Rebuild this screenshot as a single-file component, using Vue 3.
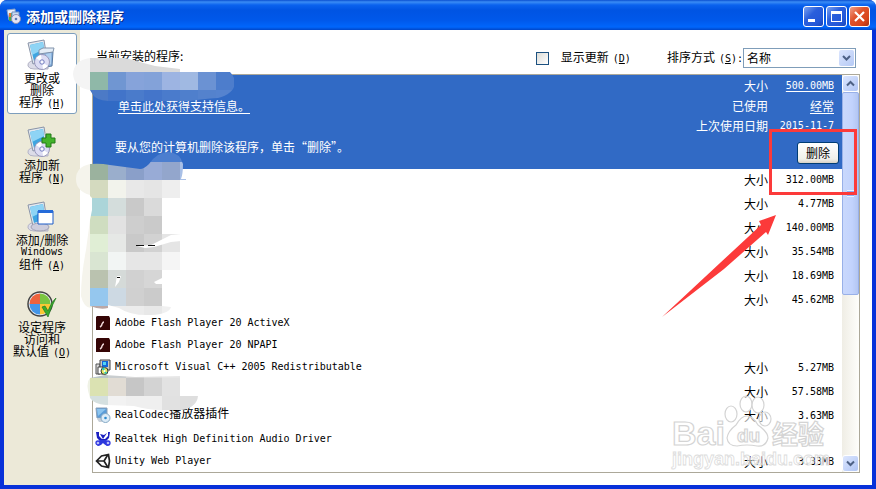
<script setup>
import { ref } from 'vue';

const showUpdates = ref(false);
const sortBy = ref('名称');

const tasks = [
  { icon: 'change', lines: ['更改或', '删除'], last: '程序', key: 'H', active: true },
  { icon: 'add', lines: ['添加新'], last: '程序', key: 'N' },
  { icon: 'windows', lines: ['添加/删除', 'Windows'], last: '组件', key: 'A' },
  { icon: 'defaults', lines: ['设定程序', '访问和'], last: '默认值', key: 'O' },
];

const programs = [
  { id: 1, size: '312.00MB' },
  { id: 2, size: '4.77MB' },
  { id: 3, size: '140.00MB' },
  { id: 4, size: '35.54MB' },
  { id: 5, size: '18.69MB' },
  { id: 6, size: '45.62MB' },
  { id: 7, icon: 'flash', name: 'Adobe Flash Player 20 ActiveX' },
  { id: 8, icon: 'flash', name: 'Adobe Flash Player 20 NPAPI' },
  { id: 9, icon: 'setup', name: 'Microsoft Visual C++ 2005 Redistributable', size: '5.27MB' },
  { id: 10, size: '57.58MB' },
  { id: 11, icon: 'codec', name: 'RealCodec', suffix: '播放器插件', size: '3.63MB' },
  { id: 12, icon: 'realtek', name: 'Realtek High Definition Audio Driver' },
  { id: 13, icon: 'unity', name: 'Unity Web Player', size: '3.33MB' },
];

// mosaic cells, 18px each, starting at x = 90
const topMosaic = [
  { y: 72, colors: ['#8fb8a8', '#7096d2', '#86a3da', '#83a2d9', '#9db4e2', '#a0b9e2', '#6b92d3', '#4d7dcc'] },
  { y: 90, colors: ['#4c7ac6', '#4274c9', '#4a7bcb', '#4475ca', '#4a7bcc', '#4f7fcc', '#5482cd', '#5583cf'] },
];
const middleMosaic = [
  { y: 144, colors: ['#4c7ecf', '#4c7ecf', '#4c7ecf', '#4c7ecf', '#4c7ecf', '#5584d0'] },
  { y: 162, colors: ['#9bb29e', '#9aaecc', '#8a9fc9', '#98abd6', '#93a6cc', '#a8bfe6'] },
  { y: 180, colors: ['#d4dabf', '#f2f3ec', '#e8e8e8', '#e5e5e5', '#eeeeee'] },
  { y: 198, colors: ['#abd5d9', '#d4dddc', '#c9c9c9', '#dadada'] },
  { y: 216, colors: ['#cfddc0', '#e2e2e2', '#cecece', '#cacaca'] },
  { y: 234, colors: ['#e0eed5', '#e6e8e6', '#c9c9c9', '#d2d2d2', '#e5e5e5'] },
  { y: 252, colors: ['#d9e5d2', '#f2f5f4', '#e6e6e6', '#e6e6e6', '#f5f5f5'] },
  { y: 270, colors: ['#bac2af', '#d5dad8', '#d1d1d1', '#d6d6d6'] },
  { y: 288, colors: ['#95c7ee', '#cdd9e3', '#d0d0d0', '#cbcbcb'] },
  { y: 306, colors: ['#bba8a6', '#ececec', '#ececec', '#e8e8e8', '#f0f0f0'] },
];
const bottomMosaic = [
  { y: 360, colors: ['#b9c5c8', '#c9cdcf', '#d8d8d8', '#e0e0e0', '#e6e6e6'] },
  { y: 378, colors: ['#dbe2b2', '#e1dcd4', '#c6c6c6', '#d3d3d3', '#e2e2e2'] },
  { y: 396, colors: ['#d5e0e0', '#f2f2f2', '#efefef', '#efefef', '#e1e1e1', '#dedede'] },
];
const mosaics = [
  { clip: 'url(#clipTop)', rows: topMosaic },
  { clip: 'url(#clipMiddle)', rows: middleMosaic },
  { clip: 'url(#clipBottom)', rows: bottomMosaic },
];
</script>

<template>
  <div class="window">
    <header class="titlebar">
      <svg class="title-icon" width="16" height="16" viewBox="0 0 16 16">
        <path d="M1 2l8-1 1 10-7 1z" fill="#e9eef8" stroke="#8aa2c8" />
        <path d="M3 5h4v8H3z" fill="#48a848" />
        <path d="M3 5h2v4H3z" fill="#e87830" />
        <path d="M6 4h7v8H6z" fill="#c9dbf4" stroke="#7190c0" />
        <circle cx="10" cy="11" r="4.5" fill="#e4e4f4" stroke="#8c90b4" />
        <circle cx="10" cy="11" r="1.3" fill="#5a78b0" />
      </svg>
      <h1>添加或删除程序</h1>
      <div class="window-buttons">
        <button type="button" aria-label="最小化">
          <svg width="19" height="19" viewBox="0 0 19 19"><path d="M4 12h7v3H4z" fill="#fff" /></svg>
        </button>
        <button type="button" aria-label="最大化">
          <svg width="19" height="19" viewBox="0 0 19 19">
            <path d="M4 4h11v11H4zM5 7v7h9V7z" fill="#fff" fill-rule="evenodd" />
          </svg>
        </button>
        <button type="button" class="close" aria-label="关闭">
          <svg width="19" height="19" viewBox="0 0 19 19">
            <path d="M5 5l9 9M14 5l-9 9" stroke="#fff" stroke-width="2.2" />
          </svg>
        </button>
      </div>
    </header>

    <div class="body">
      <nav class="sidebar">
        <button
          v-for="task in tasks"
          :key="task.icon"
          type="button"
          class="task"
          :class="{ active: task.active }"
        >
          <svg v-if="task.icon !== 'defaults'" width="32" height="32" viewBox="0 0 32 32">
            <path d="M5 22q-4 2-3 5t6 3h14v-5z" fill="#dcdce8" stroke="#b4b4c6" />
            <path d="M2 4l16-3 3 19-14 5z" fill="#e3e8ef" stroke="#8994a8" />
            <path d="M4 6l13-3 2 15-11 4z" fill="#3fa5e0" />
            <path d="M4 6l13-3 1 7-12 6z" fill="#8ed4f5" />
            <template v-if="task.icon === 'change'">
              <path d="M14 13h13l-1 14-12 2z" fill="#8cb4e0" stroke="#58799f" />
              <path d="M13 11l4-2h11l-1 4-14 2z" fill="#e4edf6" stroke="#8193ab" />
              <path d="M20 15l5-1v11l-5 1z" fill="#b0d0ee" />
            </template>
            <template v-if="task.icon !== 'windows'">
              <circle cx="16" cy="23" r="7.5" fill="#dcdcf3" stroke="#9898ba" />
              <path d="M16 23l-6-4q3-3 5-3zM16 23l6 4q-3 3-5 3z" fill="#fff" />
              <circle cx="16" cy="23" r="2.2" fill="#f8f8ff" stroke="#6f78bd" />
            </template>
            <path
              v-if="task.icon === 'add'"
              d="M20 8h5v4h4v5h-4v4h-5v-4h-4v-5h4z"
              fill="#43b32b"
              stroke="#237a18"
            />
            <template v-if="task.icon === 'windows'">
              <ellipse cx="14" cy="26" rx="9" ry="4" fill="#ccccdc" stroke="#a0a0b4" />
              <path d="M12 10h15v13H12z" fill="#fff" stroke="#1c5cc8" />
              <path d="M12 9h15v3H12z" fill="#256bd9" />
            </template>
          </svg>
          <svg v-else width="32" height="32" viewBox="0 0 32 32">
            <circle cx="14" cy="16" r="12" fill="#e8edf4" stroke="#444" stroke-width="1.5" />
            <path d="M14 16V5.500A10.500 10.500 0 0 0 3.500 16z" fill="#ee633d" />
            <path d="M14 16V5.500A10.500 10.500 0 0 1 24.500 16z" fill="#7bc542" />
            <path d="M14 16v10.500A10.500 10.500 0 0 1 3.500 16z" fill="#4496e8" />
            <path d="M14 16v10.500A10.500 10.500 0 0 0 24.500 16z" fill="#fbc834" />
            <path d="M16 19l3-1 3 5q3-9 8-13-5 9-8 19z" fill="#39ac2c" stroke="#237b20" stroke-width=".7" />
          </svg>
          <span
            v-for="line in task.lines"
            :key="line"
            class="line"
            :class="{ latin: line === 'Windows' }"
          >{{ line }}</span>
          <span class="line">{{ task.last }}<span class="latin key">(<u>{{ task.key }}</u>)</span></span>
        </button>
      </nav>

      <main>
        <div class="toolbar">
          <h2>当前安装的程序:</h2>
          <label class="updates">
            <input v-model="showUpdates" type="checkbox" />
            <span>显示更新<span class="latin key">(<u>D</u>)</span></span>
          </label>
          <label class="sort-label" for="sort">排序方式<span class="latin key">(<u>S</u>):</span></label>
          <div class="sort">
            <select id="sort" v-model="sortBy">
              <option>名称</option>
              <option>大小</option>
            </select>
            <span class="drop">
              <svg width="9" height="7" viewBox="0 0 9 7">
                <path d="M1 1l3.5 3.5L8 1" fill="none" stroke="#4d6185" stroke-width="2" />
              </svg>
            </span>
          </div>
        </div>

        <div class="list">
          <div class="items">
            <section class="selected">
              <div class="info">
                <a href="#">单击此处获得支持信息。</a>
                <p>要从您的计算机删除该程序，单击“删除”。</p>
              </div>
              <div class="stats">
                <div class="stat"><span>大小</span><a href="#" class="value latin">500.00MB</a></div>
                <div class="stat"><span>已使用</span><a href="#" class="value">经常</a></div>
                <div class="stat"><span>上次使用日期</span><span class="value latin">2015-11-7</span></div>
                <button type="button" class="remove">删除</button>
              </div>
            </section>

            <div
              v-for="program in programs"
              :key="program.id"
              class="row"
              :class="{ sized: program.size }"
            >
              <svg v-if="program.icon" class="row-icon" width="16" height="16" viewBox="0 0 16 16">
                <template v-if="program.icon === 'flash'">
                  <path d="M2 1h12l1 2v12H1V2z" fill="#350505" />
                  <path d="M5 12q2-1 2-3 1-2 2-2" fill="none" stroke="#f4dede" stroke-width="1.5" />
                </template>
                <template v-if="program.icon === 'setup'">
                  <path d="M1 5h4v10H1z" fill="#d8d8d8" stroke="#555" />
                  <path d="M5 1h10v10H5z" fill="#c8c8c8" stroke="#444" />
                  <path d="M7 2h6v6H7z" fill="#1467d8" />
                  <path d="M8 3h3v3H8z" fill="#52d6f4" />
                  <path d="M3 8h5v7H3z" fill="#fff" stroke="#444" />
                  <circle cx="9.5" cy="12" r="3.5" fill="#e8e85a" stroke="#333" />
                  <path d="M9.5 12l-3-2 3-2zM9.5 12l3 2-3 1z" fill="#20c8c0" />
                  <circle cx="9.5" cy="12" r="1" fill="#fff" />
                </template>
                <template v-if="program.icon === 'codec'">
                  <path d="M1 1h11v10H2z" fill="#5a9cd8" stroke="#8aa0b8" />
                  <path d="M2 2h9L3 9z" fill="#8cc4ee" />
                  <path d="M2 12h8v3H4z" fill="#c9d0d8" />
                  <circle cx="10.5" cy="11" r="4.5" fill="#dcecf8" stroke="#84a8c4" />
                  <circle cx="10.5" cy="11" r="1.3" fill="#2d8ace" />
                </template>
                <template v-if="program.icon === 'realtek'">
                  <path d="M1 1h3v4l3 3h3l3-3V1h2l-1 6-3 3H5L2 7zM5 3l3 5 4-6-3 2z" fill="#1c20c0" />
                  <path d="M5 9h6l4 5-3 1-3-2-1-1-2 2-3 1-2-2z" fill="#2c38dc" />
                  <circle cx="3" cy="12" r="2" fill="#b8bcf8" stroke="#3038e0" stroke-width="1.3" />
                  <circle cx="13" cy="12" r="2" fill="#b8bcf8" stroke="#3038e0" stroke-width="1.3" />
                </template>
                <template v-if="program.icon === 'unity'">
                  <path
                    d="M1.500 8l5-5 7-1.500L14.500 8l-1 6.500-7-1.500zM1.500 8H9M9 8l4-6.500M9 8l4 6.500"
                    fill="none"
                    stroke="#222"
                    stroke-width="1.7"
                  />
                </template>
              </svg>
              <span class="name">
                <span class="latin">{{ program.name }}</span>{{ program.suffix }}
              </span>
              <div v-if="program.size" class="stat">
                <span>大小</span><span class="value latin">{{ program.size }}</span>
              </div>
            </div>
          </div>

          <div class="scrollbar">
            <button type="button" aria-label="向上滚动">
              <svg width="9" height="7" viewBox="0 0 9 7">
                <path d="M1 5.500L4.500 2 8 5.500" fill="none" stroke="#4d6185" stroke-width="2" />
              </svg>
            </button>
            <div class="track"><div class="thumb"><i></i></div></div>
            <button type="button" aria-label="向下滚动">
              <svg width="9" height="7" viewBox="0 0 9 7">
                <path d="M1 1.500L4.500 5 8 1.500" fill="none" stroke="#4d6185" stroke-width="2" />
              </svg>
            </button>
          </div>
        </div>
      </main>
    </div>

    <!-- blurred out program names -->
    <svg class="mosaic" width="260" height="420" viewBox="0 0 260 420">
      <defs>
        <clipPath id="clipTop">
          <path d="M90 72h140q5 5 5 12-2 10-17 14-16 1-28 3H108q-12-1-15-6l-3-5z" />
        </clipPath>
        <clipPath id="clipMiddle">
          <path
            d="M90 164q10-1 20 1l30 4q4 0 9-5 8-12 20-12 11 1 14 12 0 10-2 15h5v1h-6v18h-18v36l9-1h9v37h-18v36l9 1q-2 7-20 8-20 1-32-7l-11-3v3q-8 2-18-2V220l2-10v-12l-2-2z"
          />
        </clipPath>
        <clipPath id="clipBottom">
          <path d="M90 378l15-3 30 2 49-1-4 2v18h18q-1 11-16 14h-20q-14 0-28-4l-28-1q-12-1-16-7z" />
        </clipPath>
      </defs>
      <path d="M90 58q-16 2-17 16 1 14 17 16z" fill="#f4f4f4" />
      <path d="M90 58h35l30 8 25 3v3H90z" fill="#dadada" />
      <path d="M90 164q-14 3-14 15t14 16z" fill="#f5f4ec" />
      <path d="M90 220l-4 30q-5 26-5 46 3 12 10 12z" fill="#f5f4ec" />
      <path d="M90 378q-5 5 0 20z" fill="#eff2e5" />
      <g v-for="mosaic in mosaics" :key="mosaic.clip" :clip-path="mosaic.clip" shape-rendering="crispEdges">
        <template v-for="row in mosaic.rows" :key="row.y">
          <rect
            v-for="(color, i) in row.colors"
            :key="i"
            :x="90 + i * 18"
            :y="row.y"
            width="18"
            height="18"
            :fill="color"
          />
        </template>
      </g>
      <path d="M137 246l14-1 20-10 10-1v7l-10 1-17 5-9 1z" fill="#fff" />
      <path d="M136 245.500h8M148 245.500h7" stroke="#111" />
      <path d="M117 276h4l-2 6-4 5z" fill="#fff" />
      <path d="M117 277.500h3" stroke="#111" />
      <path d="M154 282l8-4v6h-6z" fill="#fff" />
    </svg>

    <div class="watermark" aria-hidden="true">
      <svg width="160" height="80" viewBox="0 0 160 80">
        <g fill="#fff" fill-opacity=".6" stroke="#d4d4d4" stroke-width="1.200">
          <ellipse cx="61" cy="19" rx="6" ry="8" />
          <ellipse cx="76" cy="9" rx="6" ry="8" />
          <ellipse cx="88" cy="10" rx="6" ry="8" />
          <ellipse cx="95" cy="24" rx="6" ry="7" />
          <path d="M77 21q6 0 11 9 10 7 10 13-2 9-11 8-10-2-20 0-9 0-10-8 1-7 9-13 5-9 11-9z" />
          <text x="2" y="50" font-size="34">Bai</text>
          <text x="67" y="47" font-size="19">du</text>
          <text x="102" y="49" font-size="26">经验</text>
        </g>
        <text x="2" y="70" font-size="18" fill="#fff" fill-opacity=".6" stroke="#dcdcdc" stroke-width=".8">jingyan.baidu.com</text>
      </svg>
    </div>

    <svg class="pointer" width="226" height="200" viewBox="0 0 226 200">
      <rect x="120.500" y="10.500" width="85" height="63" fill="none" stroke="#fc3a3a" stroke-width="3" />
      <path d="M126 95l-17 6 2 4-41 38-58 54 62-48 42-37 2 3z" fill="#fc3a3a" />
    </svg>
  </div>
</template>

<style>
body {
  margin: 0;
  background: #fff;
}
</style>

<style scoped>
.window {
  position: relative;
  box-sizing: border-box;
  height: 100vh;
  display: flex;
  flex-direction: column;
  background: #0831d9;
  border-radius: 7px 7px 0 0;
  overflow: hidden;
  color: #000;
  font-family: 'Noto Sans CJK SC', sans-serif;
  font-size: 12px;
  line-height: 12px;
}

button,
select,
input {
  font: inherit;
  color: inherit;
  margin: 0;
  padding: 0;
}

h1,
h2,
p {
  margin: 0;
  font-size: 12px;
  font-weight: normal;
}

.latin {
  font-family: 'DejaVu Sans Mono', monospace;
  font-size: 10px;
}

.key {
  margin-left: 4px;
}

/* title bar */
.titlebar {
  display: flex;
  align-items: center;
  height: 30px;
  flex: none;
  padding: 2px 6px 0;
  box-sizing: border-box;
  background: linear-gradient(#0a4fd0 0, #3a8cf5 2px, #0a62ee 5px, #0054e3 10px, #0058ea 20px, #0066fc 27px, #0046c8 30px);
  color: #fff;
}

.titlebar h1 {
  flex: 1;
  margin-left: 4px;
  font-size: 14px;
  font-weight: bold;
  text-shadow: 1px 1px #0a2a80;
}

.window-buttons {
  display: flex;
  gap: 2px;
}

.window-buttons button {
  width: 21px;
  height: 21px;
  border: 1px solid #fff;
  border-radius: 3px;
  background: linear-gradient(135deg, #7ba2f0, #2a5fdc 40%, #2458d8 75%, #1743b8);
}

.window-buttons svg {
  display: block;
}

.window-buttons .close {
  background: linear-gradient(135deg, #f0a08a, #e0532c 40%, #d9451c 75%, #a83010);
}

/* body */
.body {
  flex: 1;
  min-height: 0;
  display: flex;
  margin: 0 4px 4px;
  background: #fff;
}

.sidebar {
  width: 76px;
  flex: none;
  box-sizing: border-box;
  padding: 3px;
  display: flex;
  flex-direction: column;
  gap: 6px;
  background: #ece9d8;
}

.task {
  display: flex;
  flex-direction: column;
  align-items: center;
  padding: 5px 0;
  border: 1px solid transparent;
  border-radius: 3px;
  background: none;
}

.task.active {
  border-color: #7d9ebd;
  background: #fff;
}

.task svg {
  margin-bottom: 1px;
}

.line {
  height: 12px;
  line-height: 12px;
  white-space: nowrap;
}

main {
  flex: 1;
  min-width: 0;
  display: flex;
  flex-direction: column;
  padding: 18px 12px 12px;
}

.toolbar {
  display: flex;
  align-items: center;
  height: 20px;
  margin-bottom: 6px;
  padding: 0 4px;
  white-space: nowrap;
}

.toolbar h2 {
  flex: 1;
  margin-bottom: 4px;
}

.updates {
  display: flex;
  align-items: center;
  gap: 12px;
  margin-right: 36px;
}

.updates input {
  appearance: none;
  width: 13px;
  height: 13px;
  border: 1px solid #1c5180;
  background: linear-gradient(135deg, #dcdcd7, #fff);
}

.sort {
  position: relative;
  width: 113px;
}

.sort select {
  display: block;
  appearance: none;
  width: 100%;
  height: 20px;
  padding: 0 3px;
  border: 1px solid #7f9db9;
  border-radius: 0;
  background: #fff;
}

.drop {
  position: absolute;
  top: 2px;
  right: 2px;
  width: 15px;
  height: 16px;
  display: grid;
  place-items: center;
  border-radius: 2px;
  background: linear-gradient(135deg, #dce6fe, #b5c9f5);
  pointer-events: none;
}

/* program list */
.list {
  flex: 1;
  min-height: 0;
  display: flex;
  border: 1px solid #aca899;
}

.items {
  flex: 1;
  min-width: 0;
  overflow: hidden;
}

.selected {
  display: flex;
  justify-content: space-between;
  height: 94px;
  background: #316ac5;
  color: #fff;
}

.selected a {
  color: #fff;
  text-underline-offset: 2px;
}

.info {
  padding: 22px 0 0 22px;
  line-height: 18px;
}

.info a {
  margin-left: 3px;
}

.info p {
  margin-top: 23px;
  line-height: 18px;
}

.stats {
  display: flex;
  flex-direction: column;
  padding-top: 1px;
}

.stats .stat {
  line-height: 20px;
  height: 20px;
}

.stat {
  display: flex;
  justify-content: flex-end;
  padding-right: 8px;
  line-height: 22px;
}

.value {
  width: 66px;
  text-align: right;
}

.remove {
  align-self: flex-end;
  width: 42px;
  height: 22px;
  margin: 6px 3px 0 0;
  border: 1px solid #003c74;
  border-radius: 3px;
  background: linear-gradient(#fff, #f0f0ea 80%, #d6d0c5);
  color: #000;
}

.row {
  display: flex;
  align-items: flex-start;
  height: 22px;
  padding-left: 2px;
}

.row.sized {
  height: 24px;
}

.row-icon {
  margin-top: 2px;
  margin-right: 4px;
}

.name {
  flex: 1;
  line-height: 16px;
  white-space: nowrap;
}

/* scrollbar */
.scrollbar {
  width: 17px;
  display: flex;
  flex-direction: column;
  background: linear-gradient(90deg, #efede5, #fefefb);
}

.scrollbar button {
  display: grid;
  place-items: center;
  height: 17px;
  border: 1px solid #fff;
  border-radius: 3px;
  background: linear-gradient(135deg, #dce6fe, #b0c5f5);
}

.track {
  flex: 1;
}

.thumb {
  display: grid;
  place-items: center;
  height: 56%;
  box-sizing: border-box;
  border: 1px solid #98b0e8;
  border-radius: 2px;
  background: linear-gradient(90deg, #c9d8fc, #c2d3fd 60%, #b3c6f2);
}

.thumb i {
  width: 7px;
  height: 7px;
  background: repeating-linear-gradient(#eef4fe 0 1px, #8cb0f8 1px 2px);
}

/* things drawn over the window */
.mosaic,
.watermark,
.pointer {
  position: absolute;
  pointer-events: none;
}

.mosaic {
  top: 0;
  left: 0;
}

.pointer {
  top: 120px;
  right: 0;
}

.watermark {
  right: 46px;
  bottom: 14px;
}

.watermark svg {
  display: block;
}

.watermark text {
  font-family: 'Liberation Sans', 'Noto Sans CJK SC', sans-serif;
  font-weight: bold;
}
</style>
